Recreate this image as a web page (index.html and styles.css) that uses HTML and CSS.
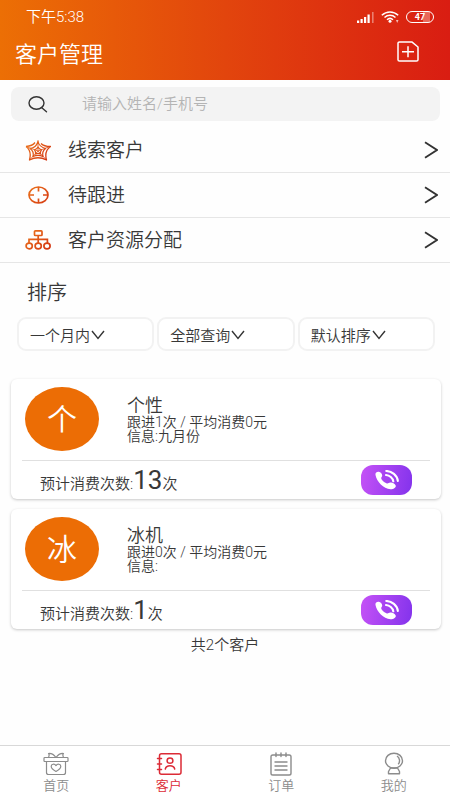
FILE: index.html
```html
<!DOCTYPE html>
<html lang="zh-CN">
<head>
<meta charset="utf-8">
<meta name="viewport" content="width=device-width, initial-scale=1">
<title>客户管理</title>
<link rel="stylesheet" href="styles.css">
</head>
<body>
<svg width="0" height="0" class="defs" aria-hidden="true">
  <defs>
    <linearGradient id="warm" gradientUnits="userSpaceOnUse" x1="0" y1="0" x2="26" y2="24">
      <stop offset="0" stop-color="#ee7a1c"/><stop offset="1" stop-color="#cf2a10"/>
    </linearGradient>
    <symbol id="next" viewBox="0 0 14 18"><path d="M1 1.200 13 9 1 16.800" fill="none" stroke="#333" stroke-width="1.900"/></symbol>
    <symbol id="down" viewBox="0 0 14 10"><path d="M1 1 7 8.500 13 1" fill="none" stroke="#333" stroke-width="1.400"/></symbol>
    <symbol id="call" viewBox="0 0 24 20">
      <path d="M.500 5C0 3 1.500 1.500 3.800 1.700c1.700.200 3.400 2 3.400 3.900 0 1.300-1.100 1.900-1 2.700.300 1.800 3.300 4.500 5.700 5.200 1.300.300 2-.900 3.400-.900 2.200 0 5.500 1.600 5.500 3.500 0 2-2.800 3.400-5.300 3.200C8.500 19 1.700 11.500.500 5z" fill="#fff"/>
      <path d="M11.300 1c5.500.100 10.900 4.300 11.500 9.900M11 5c3.500.200 6.900 2.900 7.300 6.300" fill="none" stroke="#fff" stroke-width="2.100" stroke-linecap="round"/>
    </symbol>
  </defs>
</svg>
<div class="app">
  <header class="top">
    <div class="status">
      <span>下午5:38</span>
      <div class="indicators">
        <svg width="17" height="11" viewBox="0 0 17 11" aria-hidden="true">
          <path d="M0 8.500h2.200V11H0zM3.500 7h2.200v4H3.500zM7 5h2.200v6H7zM10.500 2.500h2.200V11h-2.200z" fill="#fff"/>
          <path d="M15 0h1.600v11H15z" fill="#fff" opacity=".4"/>
        </svg>
        <svg width="18" height="12" viewBox="0 0 18 12" aria-hidden="true">
          <g fill="none" stroke="#fff" stroke-width="1.500"><path d="M.800 4.200C5.500-.200 12.500-.200 17.200 4.200M3.500 6.500c3.200-2.900 7.800-2.900 11 0M6 8.700c1.700-1.500 4.300-1.500 6 0"/></g>
          <circle cx="9" cy="10.300" r="1.500" fill="#fff"/>
          <path d="M15 9h2.500L16.200 12z" fill="#fff" opacity=".7"/>
        </svg>
        <span class="battery">47</span>
      </div>
    </div>
    <div class="titlebar">
      <h1>客户管理</h1>
      <button class="plain" aria-label="新增">
        <svg width="22" height="21" viewBox="0 0 22 21"><g fill="none" stroke="#fff" stroke-width="1.500" stroke-linejoin="round"><path d="M2.500.900h12.300L21 6v12.700c0 .900-.600 1.400-1.500 1.400h-17c-.900 0-1.500-.500-1.500-1.400V2.300C1 1.400 1.600.900 2.500.900z"/><path d="M5 10.800h12M11 5.300v11"/></g></svg>
      </button>
    </div>
  </header>

  <main>
    <label class="search">
      <svg width="20" height="17" viewBox="0 0 20 17" aria-hidden="true"><g fill="none" stroke="#333" stroke-width="1.400"><ellipse cx="8.500" cy="7" rx="7.500" ry="6.200"/><path d="M13.500 11.500 18.500 15.800" stroke-linecap="round"/></g></svg>
      <input type="search" placeholder="请输入姓名/手机号" aria-label="搜索">
    </label>

    <nav class="links">
      <a href="#leads">
        <svg width="26" height="22" viewBox="0 0 26 22" aria-hidden="true"><g fill="none" stroke="url(#warm)" stroke-linejoin="round">
          <path stroke-width="1.300" d="M1 7.500Q7.500 7 10 3.500M16 4.500Q19 7.500 25.500 7.500 19 12 21.500 21 13 16.500 4.500 21 7 12 1 7.500"/>
          <path stroke-width="1.200" d="M13 2.500Q14 7.500 20.500 9.500q-3.800 3-2.500 8-5-2.400-10 0 1.300-5-3-8 6-.500 8-7zM13 8q1 2.300 3.500 2.800-1.500 1.700-1 4.200-2.500-1.200-5 0 .500-2.500-1-4.200Q12 10.300 13 8z"/>
          <path stroke-width=".8" d="M13 1v11M25 7.500 13 12M21 20.500 13 12M5 20.500 13 12M1 7.500 13 12"/>
        </g></svg>
        <span>线索客户</span>
        <svg class="next" width="14" height="18" aria-hidden="true"><use href="#next"/></svg>
      </a>
      <a href="#follow">
        <svg width="26" height="18" viewBox="0 0 26 18" aria-hidden="true"><g fill="none" stroke="url(#warm)" stroke-width="1.700"><ellipse cx="13.500" cy="9" rx="9.500" ry="8"/><path d="M13.500 1v4.500M13.500 12.500V17M4 9h5M18 9h5"/></g></svg>
        <span>待跟进</span>
        <svg class="next" width="14" height="18" aria-hidden="true"><use href="#next"/></svg>
      </a>
      <a href="#assign">
        <svg width="26" height="20" viewBox="0 0 26 20" aria-hidden="true"><g fill="none" stroke="url(#warm)" stroke-width="1.700"><rect x="9.500" y=".9" width="7.500" height="4.600" rx=".8"/><path d="M13.200 5.500V13M4 13V9.300h18.400V13"/><ellipse cx="4.200" cy="16" rx="3.100" ry="2.800"/><ellipse cx="13.200" cy="16" rx="3.100" ry="2.800"/><ellipse cx="22" cy="16" rx="3.100" ry="2.800"/></g></svg>
        <span>客户资源分配</span>
        <svg class="next" width="14" height="18" aria-hidden="true"><use href="#next"/></svg>
      </a>
    </nav>

    <h2>排序</h2>
    <div class="filters">
      <label><select aria-label="时间"><option>一个月内</option></select><svg width="14" height="10" aria-hidden="true"><use href="#down"/></svg></label>
      <label><select aria-label="查询"><option>全部查询</option></select><svg width="14" height="10" aria-hidden="true"><use href="#down"/></svg></label>
      <label><select aria-label="排序"><option>默认排序</option></select><svg width="14" height="10" aria-hidden="true"><use href="#down"/></svg></label>
    </div>

    <section class="cards">
      <article class="card">
        <div class="person">
          <div class="avatar">个</div>
          <div class="info"><h3>个性</h3><p>跟进1次 / 平均消费0元</p><p>信息:九月份</p></div>
        </div>
        <div class="foot">
          <p>预计消费次数:<strong>13</strong>次</p>
          <button class="call" aria-label="拨打电话"><svg width="24" height="20" aria-hidden="true"><use href="#call"/></svg></button>
        </div>
      </article>
      <article class="card">
        <div class="person">
          <div class="avatar">冰</div>
          <div class="info"><h3>冰机</h3><p>跟进0次 / 平均消费0元</p><p>信息:</p></div>
        </div>
        <div class="foot">
          <p>预计消费次数:<strong>1</strong>次</p>
          <button class="call" aria-label="拨打电话"><svg width="24" height="20" aria-hidden="true"><use href="#call"/></svg></button>
        </div>
      </article>
    </section>
    <p class="total">共2个客户</p>
  </main>

  <nav class="tabs">
    <a href="#home">
      <svg width="26" height="24" viewBox="0 0 26 24" aria-hidden="true"><g fill="none" stroke="currentColor" stroke-width="1.200" stroke-linejoin="round"><rect x="1" y="5.500" width="24" height="4" rx=".8"/><path d="M3.500 9.500v11c0 1.300.700 2 2 2h15c1.300 0 2-.700 2-2v-11M13 5.500C10.500 2 8.500 1.200 5.500 1.500 6.800 2.500 6 4 5.500 5.500M13 5.500c2.500-3.500 4.500-4.300 7.500-4-1.300 1-.500 2.500 0 4M13 19.500c-3-1.600-4.800-3.200-4.800-5.200 0-2.400 3.400-2.900 4.800-.700 1.400-2.200 4.800-1.700 4.800.700 0 2-1.800 3.600-4.800 5.200z"/></g></svg>
      <span>首页</span>
    </a>
    <a href="#customers" class="active" aria-current="page">
      <svg width="26" height="24" viewBox="0 0 26 24" aria-hidden="true"><g fill="none" stroke="currentColor" stroke-width="1.500" stroke-linecap="round"><rect x="3.500" y="1.800" width="21.500" height="20.400" rx="2"/><path d="M1.500 6.500h4M1.500 12h4M1.500 17.500h4M9.300 17c1-4.200 8.400-4.200 9.400 0"/><ellipse cx="14" cy="8.700" rx="2.900" ry="2.600"/></g></svg>
      <span>客户</span>
    </a>
    <a href="#orders">
      <svg width="26" height="24" viewBox="0 0 26 24" aria-hidden="true"><g fill="none" stroke="currentColor" stroke-width="1.400" stroke-linecap="round"><rect x="3" y="3" width="20" height="20" rx="1.800"/><path d="M8 .900v3.600M13 .900v3.600M18 .900v3.600M7 10h12M7 14h12M7 18h12"/></g></svg>
      <span>订单</span>
    </a>
    <a href="#me">
      <svg width="26" height="24" viewBox="0 0 26 24" aria-hidden="true"><g fill="none" stroke="currentColor" stroke-width="1.400" stroke-linejoin="round"><ellipse cx="13" cy="8.700" rx="8.500" ry="7.500"/><path d="M9.500 16 7.500 19.500v2.200h11v-2.200L16.500 16H9.500M16 4c2.800 1.700 3.400 5.800 1.200 8.300"/></g></svg>
      <span>我的</span>
    </a>
  </nav>
</div>
</body>
</html>
```
FILE: styles.css
```css
* { box-sizing: border-box; }
body, h1, h2, h3, p { margin: 0; font-weight: inherit; }
body {
  background: #fefefe;
  color: #383838;
  font: 350 15px/20px Roboto, "Noto Sans CJK SC", sans-serif;
}
a { color: inherit; text-decoration: none; }
svg { display: block; flex: none; }
button, input, select { font: inherit; color: inherit; border: 0; padding: 0; background: none; }
.defs { position: absolute; }
.app { display: flex; flex-direction: column; min-height: 100vh; }
main { flex: 1; }

.top { background: linear-gradient(90deg, #ec6f05, #e2450d 50%, #d91d12); color: #fff; padding: 7px 0 9px; }
.status { display: flex; justify-content: space-between; padding: 0 16px 0 26px; height: 20px; align-items: center; }
.indicators { display: flex; align-items: center; gap: 7px; }
.battery { width: 28px; height: 12px; border: 1px solid #fff; border-radius: 6px; font: 700 9px/10px Roboto, sans-serif; text-align: center; background: linear-gradient(90deg, transparent 60%, #e8685a 60% 88%, transparent 88%); }
.titlebar { display: flex; justify-content: space-between; align-items: center; padding: 12px 31px 0 15px; height: 44px; }
h1 { font-size: 22px; line-height: 32px; }
.plain { display: flex; margin-bottom: 8px; }

.search { display: flex; align-items: center; height: 34px; margin: 7px 10px 7px 11px; padding-left: 17px; gap: 34px; background: #f3f3f3; border-radius: 8px; }
.search input { flex: 1; min-width: 0; outline: 0; appearance: none; }
.search input::placeholder { color: #b4b4b4; opacity: 1; }

.links a { display: flex; align-items: center; height: 45px; padding: 0 12px 0 25px; border-bottom: 1px solid #e6e6e6; font-size: 19px; }
.links span { flex: 1; margin-left: 17px; padding-top: 2px; }

h2 { font-size: 20px; line-height: 28px; padding: 16px 27px 0; }
.filters { display: grid; grid-template-columns: repeat(3, 1fr); gap: 3px; padding: 10px 15px 0 17px; }
.filters label { display: flex; align-items: center; height: 34px; padding-left: 11px; border: 2px solid #f2f2f2; border-radius: 9px; background: #fff; }
.filters select { appearance: none; padding-top: 3px; }
.filters svg { margin-top: 2px; }

.cards { display: grid; gap: 10px; padding: 28px 9px 0 11px; }
.card { height: 120px; padding: 8px 11px 0; background: #fff; border-radius: 6px; box-shadow: 0 1px 3px rgba(0, 0, 0, .22); }
.person { display: flex; gap: 28px; height: 74px; padding-left: 3px; border-bottom: 1px solid #e0e0e0; }
.avatar { width: 74px; height: 64px; border-radius: 50%; background: #ec6d05; color: #fff; font-size: 30px; line-height: 66px; text-align: center; }
.info { padding-top: 9px; font-size: 14px; line-height: 14px; }
.info h3 { font-size: 18px; line-height: 19px; }
.foot { display: flex; justify-content: space-between; padding: 4px 18px 0; }
.foot p { line-height: 30px; }
.foot strong { font-size: 26px; font-weight: 400; }
.call { display: flex; align-items: center; justify-content: center; width: 51px; height: 30px; border-radius: 12px; background: linear-gradient(100deg, #c552f6, #8333ec); }
.total { text-align: center; padding-top: 6px; }

.tabs { display: grid; grid-template-columns: repeat(4, 1fr); height: 55px; border-top: 1px solid #d8d8d8; background: #fff; color: #8c8c8c; font-size: 13px; line-height: 18px; }
.tabs a { display: flex; flex-direction: column; align-items: center; padding-top: 6px; gap: 1px; }
.tabs .active { color: #dc2b36; }
```
